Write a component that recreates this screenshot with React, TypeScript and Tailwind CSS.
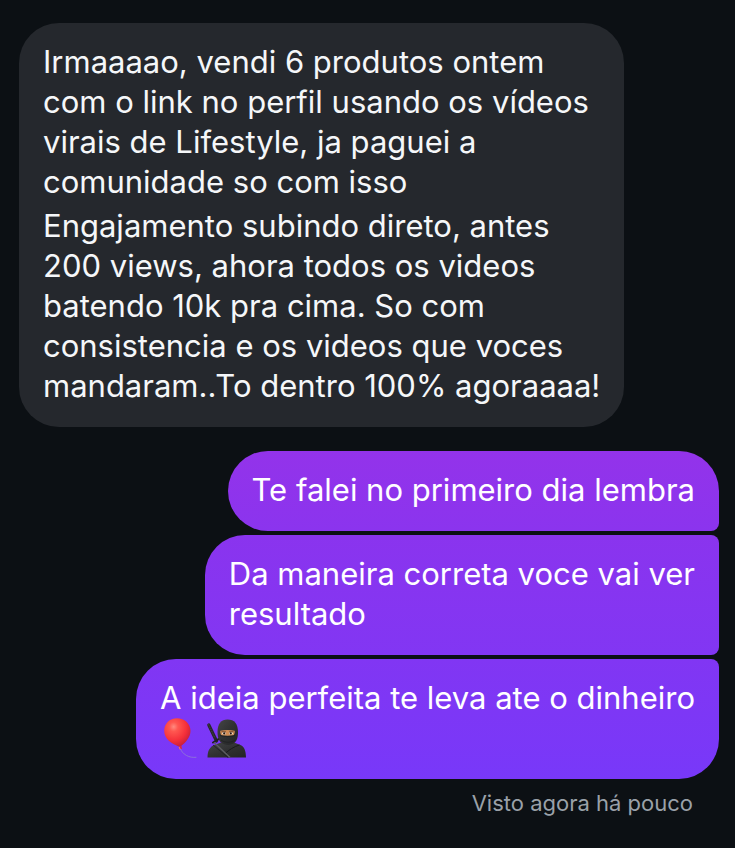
import React from "react";
import clsx from "clsx";

const Balloon = () => (
  <svg
    viewBox="0 0 40 40"
    role="img"
    aria-label="balão"
    className="w-10 h-10 shrink-0"
  >
    <defs>
      <radialGradient id="balloon" cx="0.36" cy="0.3" r="0.75">
        <stop offset="0" stopColor="#ff8a80" />
        <stop offset="0.22" stopColor="#ff5750" />
        <stop offset="0.65" stopColor="#f5303a" />
        <stop offset="1" stopColor="#c31d3c" />
      </radialGradient>
    </defs>
    <path
      d="M20.5 30.5C21 33 23 35.500 26.500 37.500C29.500 39.200 33 39.600 36 39.300"
      fill="none"
      stroke="#8d70da"
      strokeWidth="1"
      strokeLinecap="round"
    />
    <path
      d="M17 0.300C24.500 0.300 30.500 5.600 30.500 12.800C30.500 19.500 25.700 24.600 20.800 28.200C20.200 28.700 19.500 28.700 18.800 28.400C11.700 26 4.200 21 4.200 12.800C4.200 5.700 9.700 0.300 17 0.300Z"
      fill="url(#balloon)"
    />
    <path d="M19.500 28L21.500 28L22 31.200L20.300 30.600L18.700 31.200Z" fill="#d9273c" />
    <path d="M19.200 29L20 31.500" stroke="#ff8d83" strokeWidth="0.700" />
  </svg>
);

const Ninja = () => (
  <svg
    viewBox="0 0 40 40"
    role="img"
    aria-label="ninja"
    className="w-10 h-10 shrink-0"
  >
    <defs>
      <linearGradient id="hood" x1="0" y1="0" x2="1" y2="1">
        <stop offset="0" stopColor="#444546" />
        <stop offset="0.5" stopColor="#303132" />
        <stop offset="1" stopColor="#232425" />
      </linearGradient>
    </defs>
    {/* sword handle */}
    <path d="M2.800 7L10.500 23" stroke="#26262b" strokeWidth="3.200" strokeLinecap="round" />
    <path d="M2.300 6.300L9 20" stroke="#4a4950" strokeWidth="0.800" strokeDasharray="1.500 1" />
    <path d="M7 24.500L13 20.800" stroke="#1f2022" strokeWidth="2" strokeLinecap="round" />
    <path
      d="M1.500 39.500C1.600 33 3.500 28.500 9 26.700L15 24.500H28L34.500 27C38.500 28.800 39.900 33 40 39.500Z"
      fill="url(#hood)"
    />
    <path
      d="M11.500 14C11.500 6 15 1.500 21.500 1.500C28.500 1.500 32 6 32 14C32 20 31 26.500 22 27C13 26.500 11.500 20 11.500 14Z"
      fill="url(#hood)"
    />
    {/* eye slit */}
    <path
      d="M14.300 12.800C18.500 11.800 24.500 11.800 28.700 12.800C28.900 14.600 28.500 16.400 27.300 17.300C24 17.800 19 17.800 15.700 17.300C14.500 16.400 14.100 14.600 14.300 12.800Z"
      fill="#d18d55"
    />
    <path d="M15.500 13.800L20 14M23 14L27.500 13.800" stroke="#5a3521" strokeWidth="0.900" />
    <ellipse cx="18" cy="15.400" rx="1.900" ry="1.100" fill="#f1eee9" />
    <ellipse cx="25" cy="15.400" rx="1.900" ry="1.100" fill="#f1eee9" />
    <circle cx="18.200" cy="15.400" r="1.100" fill="#24160f" />
    <circle cx="24.800" cy="15.400" r="1.100" fill="#24160f" />
    <path
      d="M14 17.500C18 19 25 19 29 17.500M15 22C19 25 25 25 29 22"
      fill="none"
      stroke="#1d1e1f"
      strokeWidth="0.700"
    />
    <path d="M10 27C14 30 19 35 23 39.500M33.500 27C28 28.500 23 32 19 35.500" fill="none" stroke="#191a1b" strokeWidth="1" />
    <path d="M8 24.500L24 39.500" stroke="#5c5d60" strokeWidth="1.500" />
    <path d="M7 27L22 39.500" stroke="#202122" strokeWidth="0.800" />
  </svg>
);

type BubbleProps = {
  children: React.ReactNode;
  className?: string;
};

const Sent = ({ children, className }: BubbleProps) => (
  <div
    className={clsx(
      "w-fit max-w-full rounded-l-[40px] px-6 pt-[19px] pb-[21px] text-white",
      className
    )}
  >
    {children}
  </div>
);

const App = () => {
  return (
    <main className="min-h-screen bg-[#0c1014] pt-[23px] pb-7 pl-[19px] pr-4 flex flex-col font-['Inter','Liberation_Sans',sans-serif] text-[31px] leading-10">
      <div className="self-start w-fit rounded-[40px] bg-[#25282d] px-6 pt-[19px] pb-[21px] flex flex-col gap-1 text-[#f5f7f9]">
        <p>
          Irmaaaao, vendi 6 produtos ontem
          <br />
          com o link no perfil usando os vídeos
          <br />
          virais de Lifestyle, ja paguei a
          <br />
          comunidade so com isso
        </p>
        <p>
          Engajamento subindo direto, antes
          <br />
          200 views, ahora todos os videos
          <br />
          batendo 10k pra cima. So com
          <br />
          consistencia e os videos que voces
          <br />
          mandaram..To dentro 100% agoraaaa!
        </p>
      </div>

      <div className="mt-6 flex flex-col items-end gap-1">
        <Sent className="rounded-tr-[40px] rounded-br-lg bg-linear-to-b from-[#9333ea] to-[#8b34ee]">
          <p>Te falei no primeiro dia lembra</p>
        </Sent>
        <Sent className="rounded-r-lg bg-linear-to-b from-[#8a34ee] to-[#8236f3]">
          <p>
            Da maneira correta voce vai ver
            <br />
            resultado
          </p>
        </Sent>
        <Sent className="rounded-tr-lg rounded-br-[40px] bg-linear-to-b from-[#8136f3] to-[#7838f9]">
          <p>A ideia perfeita te leva ate o dinheiro</p>
          <div className="flex gap-1.5">
            <Balloon />
            <Ninja />
          </div>
        </Sent>
      </div>

      <p className="mt-2 pr-[26px] text-right text-[22px] leading-8 text-[#9aa1a9]">
        Visto agora há pouco
      </p>
    </main>
  );
};

export default App;
